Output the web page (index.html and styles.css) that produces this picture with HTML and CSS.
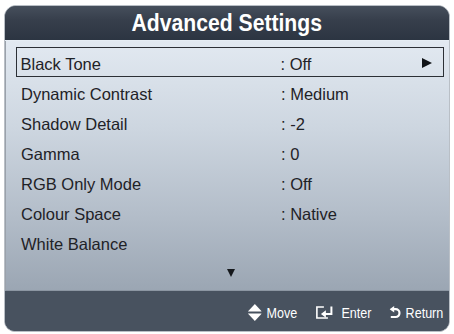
FILE: index.html
```html
<!DOCTYPE html>
<html>
<head>
<meta charset="utf-8">
<link rel="stylesheet" href="styles.css">
</head>
<body>
<div class="panel">
  <div class="header"><span class="title">Advanced Settings</span></div>
  <div class="body">
    <ul class="list">
      <li class="row selected"><span class="label">Black Tone</span><span class="value">: Off</span><span class="arrow"></span></li>
      <li class="row"><span class="label">Dynamic Contrast</span><span class="value">: Medium</span></li>
      <li class="row"><span class="label">Shadow Detail</span><span class="value">: -2</span></li>
      <li class="row"><span class="label">Gamma</span><span class="value">: 0</span></li>
      <li class="row"><span class="label">RGB Only Mode</span><span class="value">: Off</span></li>
      <li class="row"><span class="label">Colour Space</span><span class="value">: Native</span></li>
      <li class="row"><span class="label">White Balance</span><span class="value"></span></li>
    </ul>
    <div class="more"><span class="down"></span></div>
  </div>
  <div class="footer">
    <div class="hints">
      <div class="hint hint-move">
        <svg class="ico" width="17.3" height="17" viewBox="0 0 14 17" preserveAspectRatio="none"><polygon points="7,0 14,7.5 0,7.5" fill="#fff"/><polygon points="0,9.5 14,9.5 7,17" fill="#fff"/></svg>
        <span>Move</span>
      </div>
      <div class="hint hint-enter">
        <svg class="ico" width="23.5" height="13" viewBox="0 0 19 13" preserveAspectRatio="none"><path d="M8 1H1V12H12" fill="none" stroke="#fff" stroke-width="1.6"/><path d="M15.5 0.5V8H9" fill="none" stroke="#fff" stroke-width="2"/><polygon points="5,8 10,4.2 10,11.8" fill="#fff"/></svg>
        <span>Enter</span>
      </div>
      <div class="hint hint-return">
        <svg class="ico" width="13.6" height="13" viewBox="0 0 11 13" preserveAspectRatio="none"><path d="M3.2 3.2H6A3.9 3.9 0 0 1 6 11H1.2" fill="none" stroke="#fff" stroke-width="2.2"/><polygon points="0,3.2 4.6,0 4.6,6.4" fill="#fff"/></svg>
        <span>Return</span>
      </div>
    </div>
  </div>
</div>
</body>
</html>
```

FILE: styles.css
```css
html, body {
  margin: 0;
  padding: 0;
  background: #ffffff;
}

body {
  font-family: "Liberation Sans", Arial, sans-serif;
  width: 454px;
  height: 334px;
  overflow: hidden;
}

.panel {
  margin: 5px 4px 0 4px;
  width: 446px;
  height: 327px;
  box-sizing: border-box;
  border: 1px solid #b9bfc6;
  border-radius: 12px 12px 11px 11px;
  overflow: hidden;
  display: flex;
  flex-direction: column;
  background: #48525f;
}

.header {
  height: 34px;
  flex: none;
  background: linear-gradient(#464f5c 0%, #373f4c 40%, #2c3542 100%);
  color: #ffffff;
  font-weight: bold;
  font-size: 23.5px;
  line-height: 35px;
  text-align: center;
  border-bottom: 1px solid #e6edf4;
}

/* title font is slightly condensed */
.title {
  display: inline-block;
  transform: scaleX(0.9);
  transform-origin: center;
}

.body {
  flex: none;
  height: 250px;
  background: linear-gradient(#e2e9f1 0%, #cdd6e0 35%, #b3bdc9 70%, #9ba6b3 100%);
  border-left: 1px solid #9aa1aa;
  border-bottom: 1px solid #8c96a2;
  box-sizing: border-box;
  padding: 6px 5px 0 10px;
  display: flex;
  flex-direction: column;
}

.list {
  list-style: none;
  margin: 0;
  padding: 0;
}

.row {
  height: 30px;
  box-sizing: border-box;
  display: flex;
  align-items: center;
  padding: 5px 11px 0 4px;
  border: 1px solid transparent;
  font-size: 16.5px;
  color: #1f2227;
}

.row.selected {
  border: 1.5px solid #2c3036;
  padding-left: 3.5px;
}

.label {
  width: 260px;
  flex: none;
}

.value {
  flex: 1;
}

.arrow {
  width: 0;
  height: 0;
  border-top: 5.5px solid transparent;
  border-bottom: 5.5px solid transparent;
  border-left: 10px solid #111418;
  margin-top: -4px;
}

.more {
  display: flex;
  justify-content: center;
  padding-top: 12px;
  padding-left: 2px;
}

.down {
  width: 0;
  height: 0;
  border-left: 4px solid transparent;
  border-right: 4px solid transparent;
  border-top: 8px solid #15181c;
}

.footer {
  flex: 1;
  background: #48525f;
  display: flex;
  justify-content: flex-end;
  align-items: center;
  padding: 3px 6px 0 0;
  color: #ffffff;
  font-family: "Liberation Sans", Arial, sans-serif;
  font-size: 15.5px;
}

/* the TV font is a condensed sans: compress the hint strip horizontally */
.hints {
  display: flex;
  align-items: center;
  gap: 22.5px;
  transform: scaleX(0.81);
  transform-origin: right center;
}

.hint {
  display: flex;
  align-items: center;
}

.hint-move { gap: 5.8px; }
.hint-enter { gap: 8.6px; }
.hint-return { gap: 6px; }

.ico {
  display: block;
  flex: none;
}
```
